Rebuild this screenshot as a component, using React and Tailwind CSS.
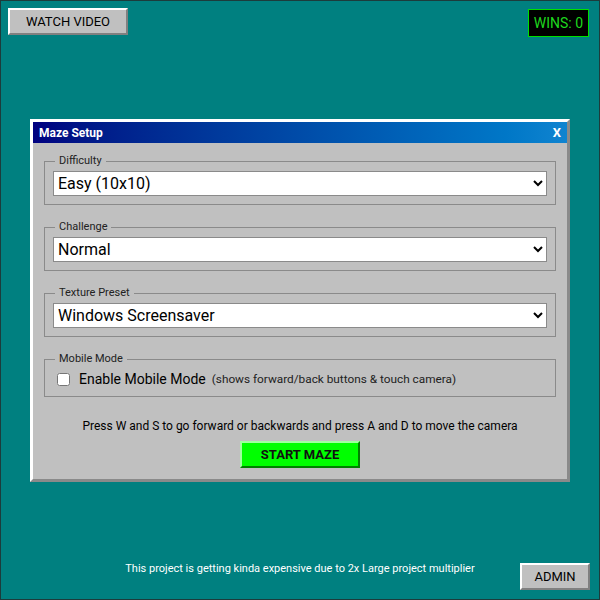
import { useState } from "react";

const font = { fontFamily: "Roboto, 'Noto Sans', sans-serif" };

// classic raised 98-style bevel
const bevel =
  "border-2 border-t-white border-l-white border-r-[#808080] border-b-[#808080]";

function Group({ label, children, className = "" }) {
  return (
    <fieldset className={`mx-[11px] border border-[#8a8a8a] px-2 pt-[4px] pb-2 ${className}`}>
      <legend className="px-1 ml-[2px] text-[11px] leading-[12px] text-[#222]">{label}</legend>
      {children}
    </fieldset>
  );
}

function Picker({ value, options }) {
  return (
    <select
      defaultValue={value}
      className="block w-full h-[25px] bg-white border border-[#8a8a8a] pl-0 text-[16px] text-black"
      style={font}
    >
      {options.map((o) => (
        <option key={o}>{o}</option>
      ))}
    </select>
  );
}

export default function App() {
  const [mobile, setMobile] = useState(false);

  return (
    <div
      className="relative w-[600px] h-[600px] bg-[#008080] border border-[#1c3c3c] flex flex-col"
      style={font}
    >
      <div className="flex items-start justify-between pl-[7px] pr-[10px] pt-[7px]">
        <button className={`${bevel} bg-[#c0c0c0] w-[120px] h-[27px] text-[13px] text-black`}>
          WATCH VIDEO
        </button>
        <div className="mt-[1px] border border-[#00e000] bg-black px-[5px] h-[28px] flex items-center text-[14px] text-[#1ed81e]">
          WINS: 0
        </div>
      </div>

      <div className="flex justify-center mt-[82px]">
        <div className="w-[540px] h-[363px] bg-[#c0c0c0] border-[3px] border-t-white border-l-white border-r-[#8a8a8a] border-b-[#8a8a8a]">
          <div className="h-[21px] flex items-center justify-between px-[6px] bg-gradient-to-r from-[#000080] to-[#1084d0] text-white text-[12px] font-bold">
            <span>Maze Setup</span>
            <span className="text-[13px]">X</span>
          </div>

          <div className="pt-[12px] flex flex-col gap-[16px]">
            <Group label="Difficulty">
              <Picker value="Easy (10x10)" options={["Easy (10x10)", "Medium (20x20)", "Hard (30x30)"]} />
            </Group>
            <Group label="Challenge">
              <Picker value="Normal" options={["Normal", "Timed", "Dark"]} />
            </Group>
            <Group label="Texture Preset">
              <Picker value="Windows Screensaver" options={["Windows Screensaver", "Stone", "Brick"]} />
            </Group>
            <Group label="Mobile Mode" className="pb-[6px]">
              <label className="flex items-center pl-[4px]">
                <input
                  type="checkbox"
                  checked={mobile}
                  onChange={(e) => setMobile(e.target.checked)}
                  className="w-[13px] h-[13px] m-0"
                />
                <span className="ml-[9px] text-[14px] text-black">Enable Mobile Mode</span>
                <span className="ml-[6px] text-[11.8px] text-[#222]">
                  (shows forward/back buttons &amp; touch camera)
                </span>
              </label>
            </Group>
          </div>

          <p className="mt-[20px] text-center text-[12px] text-black">
            Press W and S to go forward or backwards and press A and D to move the camera
          </p>
          <div className="flex justify-center mt-[6px]">
            <button className="w-[120px] h-[27px] bg-[#00ff00] border-2 border-t-[#a0ffa0] border-l-[#a0ffa0] border-r-[#008000] border-b-[#008000] text-[13px] font-bold text-[#111]">
              START MAZE
            </button>
          </div>
        </div>
      </div>

      <div className="mt-auto flex items-end pb-[9px] pr-[9px]">
        <div className="w-[79px]" />
        <p className="flex-1 text-center pb-[13px] text-[11px] text-white">
          This project is getting kinda expensive due to 2x Large project multiplier
        </p>
        <button className={`${bevel} bg-[#c0c0c0] w-[70px] h-[27px] text-[13px] text-black`}>
          ADMIN
        </button>
      </div>
    </div>
  );
}
